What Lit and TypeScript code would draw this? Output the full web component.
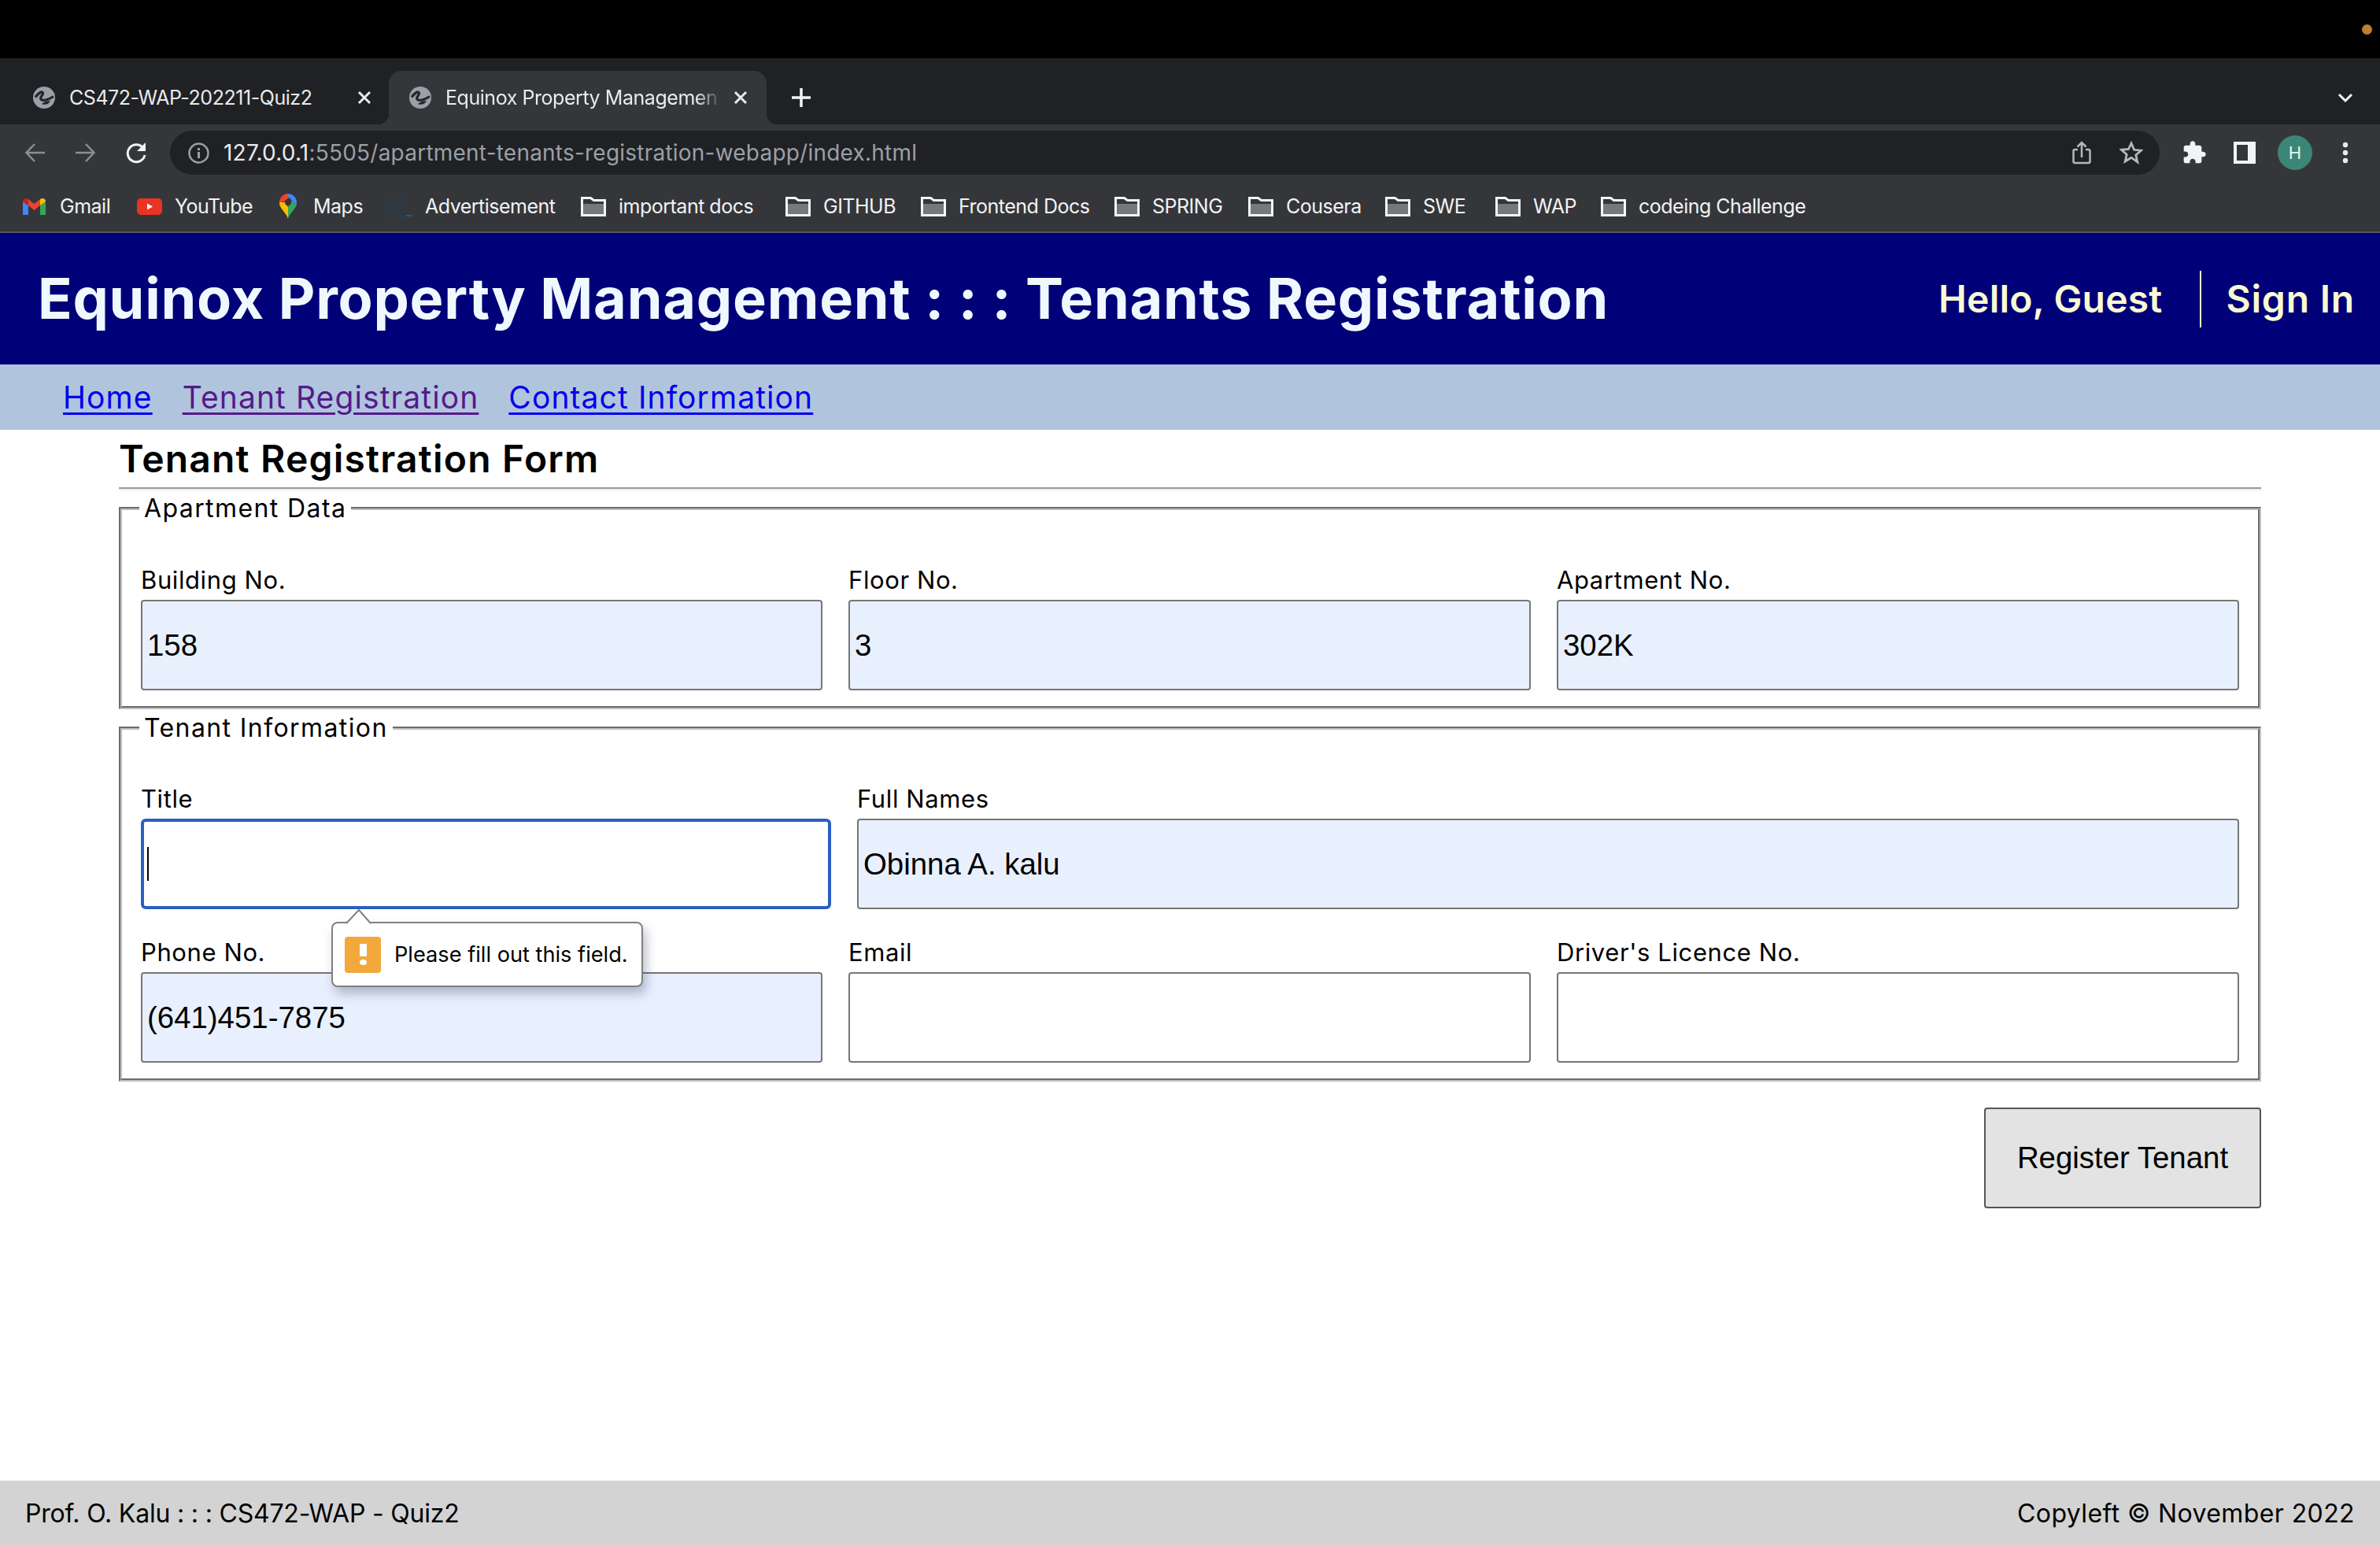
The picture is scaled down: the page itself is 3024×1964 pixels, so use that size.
import { LitElement, html, css } from "lit";
import { customElement } from "lit/decorators.js";

const globe = html`<svg class="fav" viewBox="0 0 28 28"><circle cx="14" cy="14" r="14" fill="#9aa0a6"/><path d="M3 13.500C7 8 11 5.500 12.500 8 13.500 11 8 13 10 16c2 3 9 1 16-3.500" fill="none" stroke="#26272b" stroke-width="3.200"/><path d="M11 22c4 2 9 .5 11-4l-6 .5z" fill="#26272b"/></svg>`;
const closeX = html`<svg class="close" viewBox="0 0 18 18"><path d="M2 2l14 14M16 2L2 16" stroke="#e8eaed" stroke-width="3" fill="none"/></svg>`;
const folder = html`<svg class="ic-folder" viewBox="0 0 32 25"><path d="M1.500 1.500h11l4 3h14v19h-29z" fill="none" stroke="#f4f5f6" stroke-width="3"/><rect x="3" y="9" width="26" height="13" fill="#77787b"/></svg>`;
const gmail = html`<svg class="ic-gmail" viewBox="0 0 29 21"><path d="M0 21V4l7 5v12z" fill="#4285f4"/><path d="M22 21V9l7-5v17z" fill="#34a853"/><path d="M7 1l7.500 6L22 1v8l-7.500 6L7 9z" fill="#ea4335"/><path d="M0 4c0-3.500 4-5 7-3v8z" fill="#c5221f"/><path d="M22 1c3-2 7-.5 7 3l-7 5z" fill="#fbbc04"/></svg>`;
const youtube = html`<svg class="ic-yt" viewBox="0 0 32 21"><rect width="32" height="21" rx="5" fill="#ea3323"/><path d="M13 6.500l7 4-7 4z" fill="#fff"/></svg>`;
const maps = html`<svg class="ic-pin" viewBox="0 0 22 32"><path d="M11 32C9 25 3 21 .5 15L8 13l3 4z" fill="#fbbc04"/><path d="M11 32c2-7 8-11 10.500-17L16 9l-5 8z" fill="#34a853"/><path d="M3.500 3C5.500 1 8 0 11 0l3 3-6 6-5 2-3 0C0 8 1.500 5 3.500 3z" fill="#ea4335"/><path d="M11 0c6 0 11 5 11 11 0 1.500-.2 2.800-.5 4L16 9l-5-5.500z" fill="#4285f4"/><path d="M0 11l8 0 0 3-7.500 1C.2 13.800 0 12.500 0 11z" fill="#fbbc04"/><circle cx="11" cy="11" r="4" fill="#35363a"/></svg>`;
const advert = html`<svg class="ic-ad" viewBox="0 0 33 25"><rect x="1" y="1" width="19" height="23" fill="none" stroke="#1f3f55" stroke-width="2"/><path d="M14 10a4 4 0 1 0 0 6" fill="none" stroke="#1f3f55" stroke-width="1.800"/><rect x="24" y="23" width="9" height="2" fill="#2a5577"/></svg>`;

type Bookmark = { label: string; icon: unknown; width: number };
const bookmarks: Bookmark[] = [
  { label: "Gmail", icon: gmail, width: 145 },
  { label: "YouTube", icon: youtube, width: 180 },
  { label: "Maps", icon: maps, width: 137 },
  { label: "Advertisement", icon: advert, width: 247 },
  { label: "important docs", icon: folder, width: 260 },
  { label: "GITHUB", icon: folder, width: 172 },
  { label: "Frontend Docs", icon: folder, width: 246 },
  { label: "SPRING", icon: folder, width: 170 },
  { label: "Cousera", icon: folder, width: 174 },
  { label: "SWE", icon: folder, width: 140 },
  { label: "WAP", icon: folder, width: 134 },
  { label: "codeing Challenge", icon: folder, width: 270 },
];

@customElement("app-root")
export class AppRoot extends LitElement {
  static styles = css`
    :host { display: flex; flex-direction: column; height: 1964px; background: #fff; font-family: Inter, "Liberation Sans", sans-serif; color: #000; overflow: hidden; }
    * { box-sizing: border-box; }

    .sysbar { height: 74px; background: #000; display: flex; justify-content: flex-end; align-items: center; padding-right: 10px; }
    .dot { width: 13px; height: 13px; border-radius: 50%; background: #c07f30; }

    .tabstrip { height: 84px; background: #202124; display: flex; align-items: flex-end; padding-left: 14px; color: #e8eaed; font-size: 25px; }
    .tab { position: relative; width: 480px; height: 68px; display: flex; align-items: center; padding: 0 0 0 28px; }
    .tab.active { background: #35363a; border-radius: 16px 16px 0 0; padding-left: 26px; }
    .tab.active::before, .tab.active::after { content: ""; position: absolute; bottom: 0; width: 14px; height: 14px; }
    .tab.active::before { left: -14px; background: radial-gradient(circle at 0 0, transparent 14px, #35363a 14.500px); }
    .tab.active::after { right: -14px; background: radial-gradient(circle at 100% 0, transparent 14px, #35363a 14.500px); }
    .fav { width: 28px; height: 28px; flex: none; margin-right: 18px; }
    .tab-title { width: 346px; flex: none; white-space: nowrap; letter-spacing: -0.45px; }
    .tab.active .tab-title { -webkit-mask-image: linear-gradient(90deg, #000 92%, rgba(0, 0, 0, 0.15) 100%); mask-image: linear-gradient(90deg, #000 92%, rgba(0, 0, 0, 0.15) 100%); }
    .close { width: 18px; height: 18px; flex: none; margin-left: 20px; }
    .plus { width: 26px; height: 26px; margin-left: 31px; margin-bottom: 21px; flex: none; }
    .chev { width: 20px; height: 12px; margin-left: auto; margin-right: 34px; margin-bottom: 28px; flex: none; }

    .toolbar { height: 76px; background: #35363a; display: flex; align-items: flex-start; padding: 8px 0 0 31px; }
    .nav-ico { width: 28px; height: 28px; flex: none; margin-top: 14px; }
    .nav-ico.fwd { margin-left: 35px; }
    .nav-ico.rel { margin-left: 37px; }
    .omni { width: 2528px; height: 56px; margin-left: 29px; border-radius: 28px; background: #202124; display: flex; align-items: center; padding: 0 21px 0 23px; font-size: 28px; color: #9aa0a6; }
    .info { width: 27px; height: 27px; flex: none; margin-right: 18px; }
    .url { flex: 1; white-space: nowrap; letter-spacing: 0.22px; }
    .host-part { color: #e8eaed; }
    .omni-ico { width: 30px; height: 30px; flex: none; }
    .omni-ico.share { margin-right: 33px; margin-left: -1px; }
    .tools { display: flex; align-items: center; height: 56px; margin-left: 28px; }
    .puzzle { width: 32px; height: 32px; }
    .sidebar { width: 28px; height: 28px; margin-left: 34px; border: solid #f1f3f4; border-width: 4px 10px 4px 4px; background: #35363a; }
    .avatar { width: 44px; height: 44px; border-radius: 50%; background: #3b8677; color: #e8f5f0; margin-left: 28px; display: flex; align-items: center; justify-content: center; font-size: 22px; }
    .kebab { width: 8px; height: 28px; margin-left: 38px; }

    .bookmarks { height: 62px; background: #35363a; border-bottom: 2px solid #55565a; display: flex; align-items: center; padding: 0 0 4px 29px; color: #f1f3f4; font-size: 25px; letter-spacing: -0.5px; }
    .bm { display: flex; align-items: center; gap: 16px; white-space: nowrap; flex: none; }
    .ic-folder { width: 32px; height: 25px; flex: none; }
    .ic-gmail { width: 29px; height: 21px; flex: none; margin-right: 2px; }
    .ic-yt { width: 32px; height: 21px; flex: none; }
    .ic-pin { width: 22px; height: 32px; flex: none; margin: 0 5px 0 1px; }
    .ic-ad { width: 33px; height: 25px; flex: none; }

    .header { height: 167px; background: #000078; display: flex; align-items: center; justify-content: space-between; padding: 0 32px 0 48px; }
    .brand { margin: 0; padding-bottom: 2px; font-size: 72px; font-weight: 700; color: #f0f8ff; letter-spacing: 0.75px; white-space: nowrap; }
    .user { display: flex; align-items: center; color: #fafad2; font-size: 48px; font-weight: 600; }
    .hello { padding-right: 48px; letter-spacing: 0.2px; }
    .signin { height: 72px; padding-left: 31px; border-left: 2px solid #fafad2; display: flex; align-items: center; letter-spacing: 0.8px; }

    .menu { height: 83px; background: #b0c4de; display: flex; align-items: center; gap: 38px; padding-left: 80px; font-size: 39px; letter-spacing: 1.100px; }
    .menu a { color: #0000ee; text-decoration-thickness: 3px; text-underline-offset: 5px; }
    .menu a.visited { color: #551a8b; }

    .main { flex: 1; padding: 0 151px; min-height: 0; }
    .title { margin: 0; height: 73px; display: flex; align-items: center; padding-bottom: 1px; font-size: 48px; font-weight: 600; letter-spacing: 1.200px; white-space: nowrap; }
    .rule { height: 4px; border-top: 2px solid #9a9a9a; border-bottom: 2px solid #eee; }

    fieldset { margin: 1px 0 0; padding: 0 24px 20px 24px; border: 4px groove #c0c0c0; min-width: 0; }
    fieldset.second { margin-top: 2px; }
    legend { padding: 0 6px; margin-left: -2px; height: 44px; line-height: 44px; font-size: 32px; letter-spacing: 1.400px; white-space: nowrap; }
    .grid3 { display: grid; grid-template-columns: 866px 867px 867px; column-gap: 33px; }
    .grid2 { display: grid; grid-template-columns: 877px 1fr; column-gap: 33px; }
    .pt1 { padding-top: 44px; }
    .pt2 { padding-top: 43px; }
    .pt3 { padding-top: 30px; }
    .field { position: relative; min-width: 0; }
    label { display: block; height: 50px; line-height: 50px; font-size: 31px; letter-spacing: 0.6px; white-space: nowrap; }
    input { display: block; width: 100%; height: 115px; margin: 0; padding: 0 6px; border: 2px solid #767676; border-radius: 4px; background: #fff; font-family: "Liberation Sans", Arial, sans-serif; font-size: 38.400px; color: #000; outline: none; }
    input.filled { background: #e8f0fe; }
    input.focused { border: 4px solid #2a5fc4; border-radius: 6px; }
    .caret { position: absolute; left: 8px; top: 86px; width: 2px; height: 43px; background: #000; }

    .tip { position: absolute; left: 242px; top: 181px; width: 396px; height: 83px; background: #fff; border: 2px solid #808080; border-radius: 8px; box-shadow: 4px 8px 14px rgba(60, 70, 100, 0.35); display: flex; align-items: center; padding-left: 15px; z-index: 2; font-size: 27.200px; white-space: nowrap; }
    .tip-arrow { position: absolute; left: 17px; top: -18px; width: 34px; height: 19px; }
    .tip-icon { width: 46px; height: 46px; flex: none; border-radius: 4px; background: #f2a83b; margin-right: 17px; display: flex; flex-direction: column; align-items: center; justify-content: center; gap: 4px; }
    .bar { width: 9px; height: 16px; background: #fff; }
    .pt { width: 9px; height: 7px; border-radius: 50%; background: #fff; }

    .actions { display: flex; justify-content: flex-end; padding-top: 33px; }
    button { width: 352px; height: 128px; padding: 0; background: #e3e3e3; border: 2px solid #555; border-radius: 4px; font-family: "Liberation Sans", Arial, sans-serif; font-size: 38.400px; color: #000; }

    .footer { height: 83px; background: #d3d3d3; display: flex; align-items: center; justify-content: space-between; padding: 0 32px; font-size: 32px; }
    .foot-left { letter-spacing: -0.2px; }
    .foot-right { letter-spacing: 0.4px; }
  `;

  private field(label: string, value: string) {
    return html`<div class="field"><label>${label}</label><input class=${value ? "filled" : ""} type="text" .value=${value} /></div>`;
  }

  render() {
    return html`
      <div class="sysbar"><span class="dot"></span></div>
      <div class="tabstrip">
        <div class="tab">${globe}<span class="tab-title">CS472-WAP-202211-Quiz2</span>${closeX}</div>
        <div class="tab active">${globe}<span class="tab-title">Equinox Property Management</span>${closeX}</div>
        <svg class="plus" viewBox="0 0 26 26"><path d="M13 1v24M1 13h24" stroke="#f1f3f4" stroke-width="3.500" fill="none"/></svg>
        <svg class="chev" viewBox="0 0 20 12"><path d="M2 2l8 8 8-8" stroke="#f1f3f4" stroke-width="3" fill="none"/></svg>
      </div>
      <div class="toolbar">
        <svg class="nav-ico" viewBox="0 0 28 28"><path d="M26 14H3M13 3L2.500 14 13 25" stroke="#8b8e92" stroke-width="2.500" fill="none"/></svg>
        <svg class="nav-ico fwd" viewBox="0 0 28 28"><path d="M2 14h23M15 3l10.500 11L15 25" stroke="#8b8e92" stroke-width="2.500" fill="none"/></svg>
        <svg class="nav-ico rel" viewBox="0 0 28 28"><path d="M23 8a11 11 0 1 0 2 9" stroke="#f1f3f4" stroke-width="3" fill="none"/><path d="M26 1v11H15z" fill="#f1f3f4"/></svg>
        <div class="omni">
          <svg class="info" viewBox="0 0 27 27"><circle cx="13.500" cy="13.500" r="12" fill="none" stroke="#9aa0a6" stroke-width="2.500"/><path d="M12 12h3v8h-3zM12 7h3v3h-3z" fill="#9aa0a6"/></svg>
          <span class="url"><span class="host-part">127.0.0.1</span>:5505/apartment-tenants-registration-webapp/index.html</span>
          <svg class="omni-ico share" viewBox="0 0 30 30"><path d="M10 11H6.500a2 2 0 0 0-2 2v13a2 2 0 0 0 2 2h17a2 2 0 0 0 2-2V13a2 2 0 0 0-2-2H20M15 21V2M9.500 7.500L15 2l5.500 5.500" stroke="#b5b8bb" stroke-width="2.500" fill="none"/></svg>
          <svg class="omni-ico" viewBox="0 0 30 30"><path d="M15 3l3.600 8.300 9 .8-6.800 5.900 2 8.800L15 21.200 7.200 26l2-8.800-6.800-5.900 9-.8z" stroke="#b5b8bb" stroke-width="2.800" fill="none"/></svg>
        </div>
        <div class="tools">
          <svg class="puzzle" viewBox="0 0 24 24"><path fill="#f1f3f4" d="M20.500 11H19V7c0-1.100-.9-2-2-2h-4V3.500C13 2.120 11.880 1 10.500 1S8 2.120 8 3.500V5H4c-1.100 0-1.990.9-1.990 2v3.800H3.500c1.490 0 2.700 1.210 2.700 2.700s-1.210 2.700-2.700 2.700H2V20c0 1.100.9 2 2 2h3.800v-1.500c0-1.490 1.210-2.700 2.700-2.700 1.490 0 2.700 1.210 2.700 2.700V22H17c1.100 0 2-.9 2-2v-4h1.500c1.380 0 2.500-1.120 2.500-2.500S21.880 11 20.500 11z"/></svg>
          <div class="sidebar"></div>
          <div class="avatar">H</div>
          <svg class="kebab" viewBox="0 0 8 28"><circle cx="4" cy="4" r="3.200" fill="#e8eaed"/><circle cx="4" cy="14" r="3.200" fill="#e8eaed"/><circle cx="4" cy="24" r="3.200" fill="#e8eaed"/></svg>
        </div>
      </div>
      <div class="bookmarks">
        ${bookmarks.map((b) => html`<div class="bm" style="width:${b.width}px">${b.icon}<span>${b.label}</span></div>`)}
      </div>
      <header class="header">
        <h1 class="brand">Equinox Property Management : : : Tenants Registration</h1>
        <div class="user"><span class="hello">Hello, Guest</span><span class="signin">Sign In</span></div>
      </header>
      <nav class="menu">
        <a href="#">Home</a>
        <a href="#" class="visited">Tenant Registration</a>
        <a href="#">Contact Information</a>
      </nav>
      <main class="main">
        <h2 class="title">Tenant Registration Form</h2>
        <div class="rule"></div>
        <fieldset>
          <legend>Apartment Data</legend>
          <div class="grid3 pt1">
            ${this.field("Building No.", "158")}
            ${this.field("Floor No.", "3")}
            ${this.field("Apartment No.", "302K")}
          </div>
        </fieldset>
        <fieldset class="second">
          <legend>Tenant Information</legend>
          <div class="grid2 pt2">
            <div class="field">
              <label>Title</label>
              <input class="focused" type="text" />
              <span class="caret"></span>
              <div class="tip">
                <svg class="tip-arrow" viewBox="0 0 34 19"><path d="M0 18L16 1l15 17" fill="#fff" stroke="#808080" stroke-width="2"/></svg>
                <span class="tip-icon"><span class="bar"></span><span class="pt"></span></span>
                <span>Please fill out this field.</span>
              </div>
            </div>
            ${this.field("Full Names", "Obinna A. kalu")}
          </div>
          <div class="grid3 pt3">
            ${this.field("Phone No.", "(641)451-7875")}
            ${this.field("Email", "")}
            ${this.field("Driver's Licence No.", "")}
          </div>
        </fieldset>
        <div class="actions"><button type="button">Register Tenant</button></div>
      </main>
      <footer class="footer"><span class="foot-left">Prof. O. Kalu : : : CS472-WAP - Quiz2</span><span class="foot-right">Copyleft © November 2022</span></footer>
    `;
  }
}
